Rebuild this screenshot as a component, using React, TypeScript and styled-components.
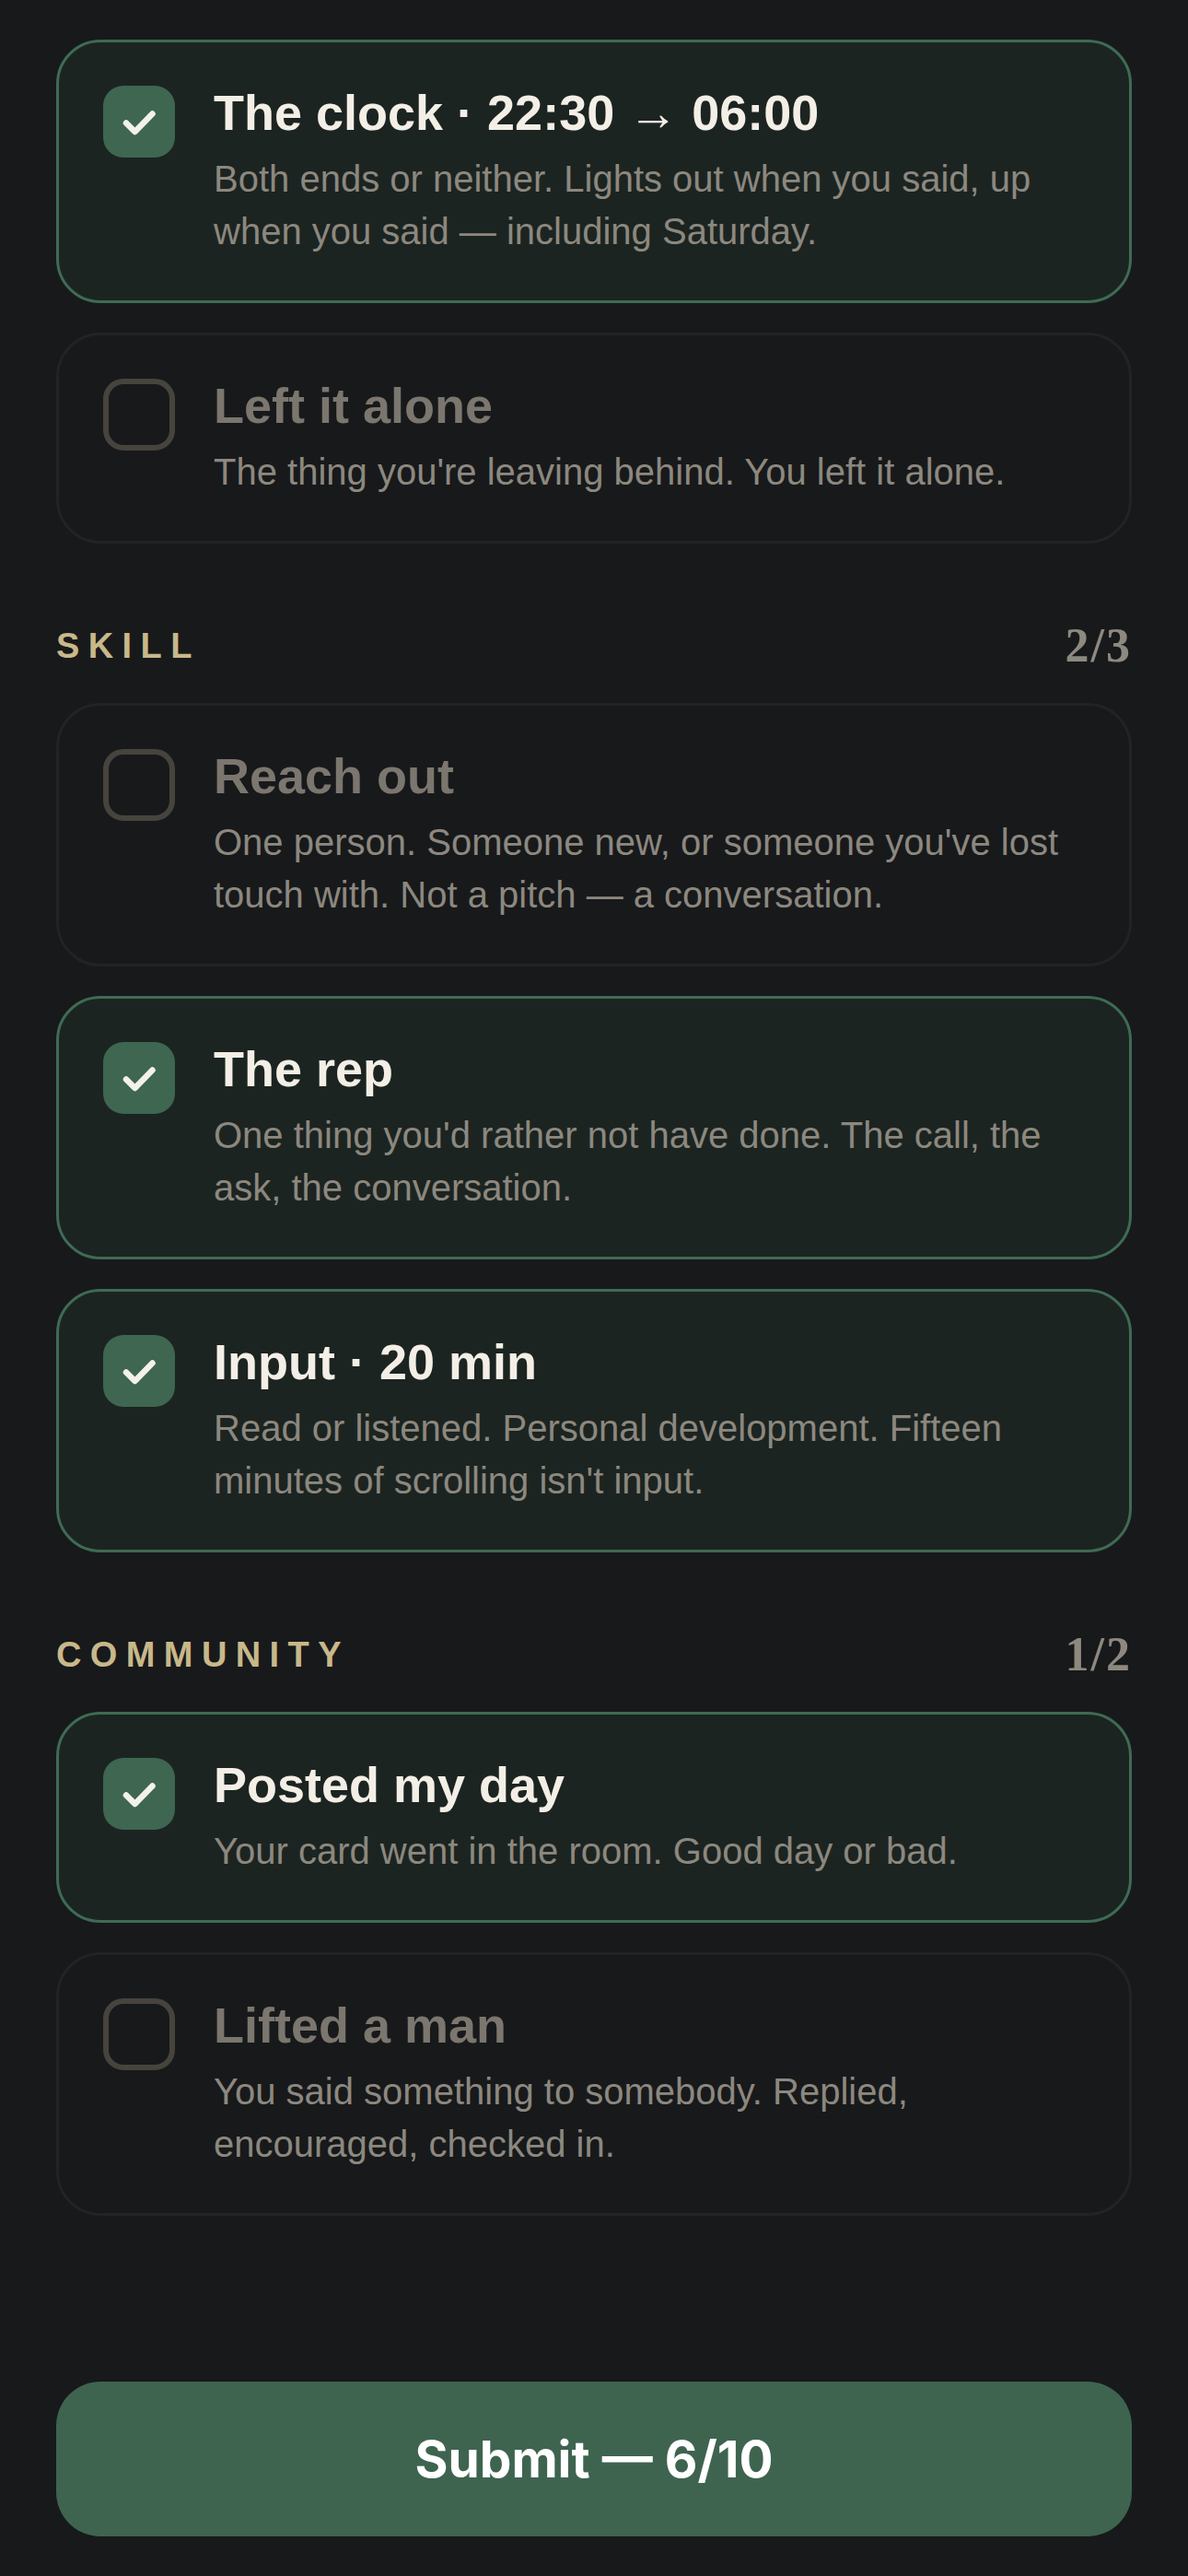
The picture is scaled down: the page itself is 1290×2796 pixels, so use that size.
import React from "react";
import styled, { createGlobalStyle } from "styled-components";

const GlobalStyle = createGlobalStyle`
  html, body {
    margin: 0;
    padding: 0;
    background: #18191b;
  }
  body {
    font-family: "Liberation Sans", Arial, sans-serif;
    -webkit-font-smoothing: antialiased;
  }
  * { box-sizing: border-box; }
`;

const Page = styled.main`
  display: flex;
  flex-direction: column;
  padding: 0 61px 43px;
  margin-top: -48px;
`;

const Section = styled.section<{ $first?: boolean }>`
  display: flex;
  flex-direction: column;
  margin-top: ${(p) => (p.$first ? "0" : "82px")};
`;

const SectionHeader = styled.header`
  display: flex;
  align-items: center;
  justify-content: space-between;
  height: 58px;
  margin-bottom: 33px;
`;

const SectionLabel = styled.h2`
  margin: 0;
  font-family: "Liberation Sans", Arial, sans-serif;
  font-weight: 700;
  font-size: 38px;
  line-height: 58px;
  letter-spacing: 9.4px;
  color: #c8b88a;
  text-transform: uppercase;
`;

const SectionCount = styled.span`
  font-family: "Liberation Serif", "Times New Roman", serif;
  font-weight: 700;
  font-size: 52px;
  line-height: 58px;
  letter-spacing: 2px;
  color: #8d897f;
`;

const CardList = styled.div`
  display: flex;
  flex-direction: column;
  gap: 32px;
`;

const Card = styled.label<{ $done: boolean }>`
  display: flex;
  align-items: flex-start;
  gap: 42px;
  padding: 47px 48px 46px;
  border-radius: 48px;
  border: 3px solid ${(p) => (p.$done ? "#3e6b54" : "#232422")};
  background: ${(p) => (p.$done ? "#1c2421" : "#18191b")};
  cursor: pointer;
`;

const Box = styled.span<{ $done: boolean }>`
  flex: 0 0 78px;
  width: 78px;
  height: 78px;
  border-radius: 22px;
  display: flex;
  align-items: center;
  justify-content: center;
  background: ${(p) => (p.$done ? "#3e6651" : "transparent")};
  border: ${(p) => (p.$done ? "none" : "6px solid #47433d")};
`;

const CheckSvg = styled.svg`
  width: 78px;
  height: 78px;
  display: block;
`;

const Body = styled.div`
  display: flex;
  flex-direction: column;
  min-width: 0;
  flex: 1;
`;

const Title = styled.div<{ $done: boolean }>`
  font-family: "Liberation Sans", Arial, sans-serif;
  font-weight: 700;
  font-size: 54px;
  line-height: 58px;
  color: ${(p) => (p.$done ? "#f3efe6" : "#7b766e")};
`;

const Desc = styled.div`
  margin-top: 15px;
  font-family: "Liberation Sans", Arial, sans-serif;
  font-size: 40px;
  line-height: 57px;
  color: #8c887f;
`;

const SubmitButton = styled.button`
  margin-top: 180px;
  height: 168px;
  width: 100%;
  border: none;
  border-radius: 48px;
  background: #3e6450;
  color: #ffffff;
  font-family: Inter, "Liberation Sans", sans-serif;
  font-weight: 700;
  font-size: 55px;
  cursor: pointer;
`;

type Item = { title: string; desc: string; done: boolean };
type Group = { label: string; count: string; items: Item[] };

const groups: Group[] = [
  {
    label: "Body",
    count: "3/5",
    items: [
      {
        title: "The clock · 22:30 → 06:00",
        desc: "Both ends or neither. Lights out when you said, up when you said — including Saturday.",
        done: true,
      },
      {
        title: "Left it alone",
        desc: "The thing you're leaving behind. You left it alone.",
        done: false,
      },
    ],
  },
  {
    label: "Skill",
    count: "2/3",
    items: [
      {
        title: "Reach out",
        desc: "One person. Someone new, or someone you've lost touch with. Not a pitch — a conversation.",
        done: false,
      },
      {
        title: "The rep",
        desc: "One thing you'd rather not have done. The call, the ask, the conversation.",
        done: true,
      },
      {
        title: "Input · 20 min",
        desc: "Read or listened. Personal development. Fifteen minutes of scrolling isn't input.",
        done: true,
      },
    ],
  },
  {
    label: "Community",
    count: "1/2",
    items: [
      {
        title: "Posted my day",
        desc: "Your card went in the room. Good day or bad.",
        done: true,
      },
      {
        title: "Lifted a man",
        desc: "You said something to somebody. Replied, encouraged, checked in.",
        done: false,
      },
    ],
  },
];

function Check() {
  return (
    <CheckSvg viewBox="0 0 78 78" fill="none" aria-hidden="true">
      <path
        d="M25 40.5 L34.5 50 L53.5 30.5"
        stroke="#f4f1ea"
        strokeWidth="6.5"
        strokeLinecap="round"
        strokeLinejoin="round"
      />
    </CheckSvg>
  );
}

export default function App() {
  return (
    <>
      <GlobalStyle />
      <Page>
        {groups.map((g, gi) => (
          <Section key={g.label} $first={gi === 0}>
            <SectionHeader>
              <SectionLabel>{g.label}</SectionLabel>
              <SectionCount>{g.count}</SectionCount>
            </SectionHeader>
            <CardList>
              {g.items.map((it) => (
                <Card key={it.title} $done={it.done}>
                  <Box $done={it.done}>{it.done && <Check />}</Box>
                  <Body>
                    <Title $done={it.done}>{it.title}</Title>
                    <Desc>{it.desc}</Desc>
                  </Body>
                </Card>
              ))}
            </CardList>
          </Section>
        ))}
        <SubmitButton type="button">Submit — 6/10</SubmitButton>
      </Page>
    </>
  );
}
